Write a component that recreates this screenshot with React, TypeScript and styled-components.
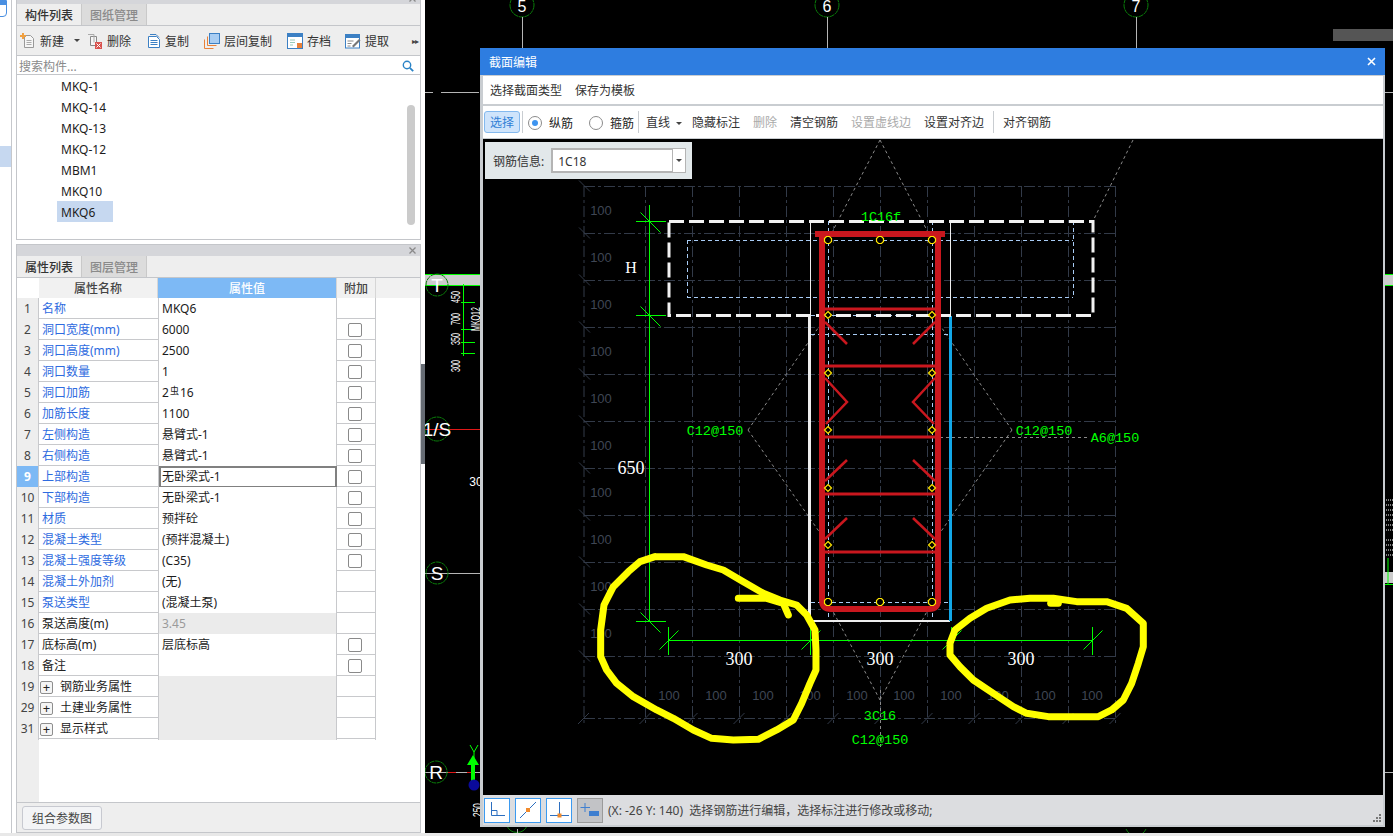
import React from 'react';
import styled, { createGlobalStyle } from 'styled-components';

const Global = createGlobalStyle`
  html, body { margin: 0; padding: 0; background: #e9e9e9; overflow: hidden; }
  * { box-sizing: border-box; }
  body { font-family: "Noto Sans", "Noto Sans CJK SC", "Liberation Sans", sans-serif; font-size: 12px; color: #222; }
`;

const Page = styled.div`width: 1393px; height: 836px; display: flex; flex-direction: column; background: #e8e8e8;`;
const Workspace = styled.div`height: 833px; display: flex;`;
const Side = styled.aside`position: relative; width: 425px; height: 100%; display: flex; background: #fff;`;
const Rail = styled.div`width: 12px; height: 100%; background: #fff; border-right: 1px solid #c6c8cc; display: flex; flex-direction: column;`;
const RailLogo = styled.svg`display: block; width: 9px; height: 20px;`;
const RailMark = styled.div`width: 11px; height: 21px; margin-top: 126px; background: #c6d8f0;`;
const Panels = styled.div`width: 405px; margin-left: 4px; display: flex; flex-direction: column; gap: 4px; height: 100%;`;
const TopPanel = styled.section`height: 240px; display: flex; flex-direction: column; border: 1px solid #c4c6ca; border-top: 0; background: #fff;`;
const BottomPanel = styled.section`flex: 1; display: flex; flex-direction: column; border: 1px solid #c4c6ca; background: #fff; min-height: 0;`;
const PanelCap = styled.div<{ $h: number }>`height: ${p => p.$h}px; background: #d5d6da; display: flex; justify-content: flex-end; align-items: flex-end; padding: 0 4px 2px 0; overflow: hidden; flex: none;`;
const CloseGlyph = styled.svg`width: 7px; height: 7px; flex: none;`;
const TabBar = styled.div`height: 22px; display: flex; background: #eee; border-bottom: 1px solid #c4c6ca; flex: none;`;
const Tab = styled.div<{ $on?: boolean }>`width: 65px; height: 21px; line-height: 23px; text-align: center; font-weight: 500;
  color: ${p => (p.$on ? '#333' : '#8a8a8a')}; background: ${p => (p.$on ? '#eee' : '#dcdcdc')}; border-right: 1px solid #c9c9c9;`;
const Tools = styled.div`height: 30px; flex: none; position: relative; display: flex; align-items: center; padding-left: 3px; background: #eee; border-bottom: 1px solid #c4c6ca;`;
const Tool = styled.div<{ $gap: number }>`display: flex; align-items: center; gap: 4px; margin-right: ${p => p.$gap}px; color: #333; white-space: nowrap;`;
const Caret = styled.i`display: inline-block; width: 0; height: 0; border: 3px solid transparent; border-top: 3px solid #444; border-bottom: 0; margin-left: 6px; vertical-align: middle;`;
const More = styled.span`position: absolute; right: 2px; top: 9px; font-size: 8px; color: #444; letter-spacing: -1px;`;
const Search = styled.div`height: 19px; flex: none; display: flex; align-items: center; justify-content: space-between; padding: 2px 6px 0 2px; color: #8a8a8a; border-bottom: 1px solid #c4c6ca;`;
const List = styled.div`position: relative; flex: 1; padding-top: 0;`;
const Item = styled.div<{ $on?: boolean }>`height: 21px; line-height: 23px; width: 56px; margin-left: 40px; padding-left: 4px; white-space: nowrap; color: #1c1c1c; background: ${p => (p.$on ? '#c6d8f0' : 'transparent')};`;
const ScrollThumb = styled.div`position: absolute; top: 30px; left: 390px; width: 8px; height: 120px; border-radius: 4px; background: #cbcbcb;`;

const Sheet = styled.div`flex: 1; display: flex; flex-direction: column; min-height: 0; background: linear-gradient(to right, #eee 22px, #fff 22px);`;
const HeadRow = styled.div`display: grid; grid-template-columns: 22px 119px 179px 39px; height: 20px; flex: none; background: #fff;`;
const HeadWide = styled.div`display: flex; height: 20px; flex: none; background: #f1f1f1;`;
const HeadCell = styled.div<{ $on?: boolean }>`line-height: 21px; text-align: center; font-weight: 500; color: ${p => (p.$on ? '#fff' : '#444')};
  background: ${p => (p.$on ? '#7db9f5' : '#f1f1f1')}; border-right: 1px solid #d6d6d6;`;
const HeadBlank = styled.div`background: #fff;`;
const Row = styled.div`display: grid; grid-template-columns: 22px 120px 178px 39px; width: 359px; height: 21px; flex: none; border-bottom: 1px solid #c8c9cc; background: #fff;`;
const NumCell = styled.div<{ $on?: boolean }>`line-height: 22px; text-align: center; border-right: 1px solid #c8c9cc; font-weight: ${p => (p.$on ? 700 : 400)}; font-size: 12px;
  background: ${p => (p.$on ? '#7db9f5' : '#eee')}; color: ${p => (p.$on ? '#fff' : '#444')};`;
const NameCell = styled.div<{ $blue?: boolean }>`line-height: 22px; padding-left: 3px; white-space: nowrap; border-right: 1px solid #c8c9cc; color: ${p => (p.$blue ? '#2e6be0' : '#222')};`;
const GroupName = styled(NameCell)`display: flex; align-items: center; gap: 7px; padding-left: 1px;`;
const PlusBox = styled.span`width: 13px; height: 13px; border: 1px solid #8e8e8e; border-radius: 2px; background: #f5f5f5; line-height: 10px; text-align: center; font-size: 13px; color: #222;`;
const ValueCell = styled.div<{ $grey?: boolean; $muted?: boolean; $focus?: boolean }>`line-height: 22px; padding-left: 3px; white-space: nowrap; border-right: 1px solid #c8c9cc;
  background: ${p => (p.$grey ? '#ebebeb' : '#fff')}; color: ${p => (p.$muted ? '#9a9a9a' : '#1c1c1c')};
  ${p => p.$focus && 'outline: 2px solid #808080; outline-offset: -2px;'}`;
const Rebar = styled.sup`font-size: 9px; line-height: 0; margin: 0 1px; vertical-align: 3px;`;
const ExtraCell = styled.div`display: flex; align-items: center; justify-content: center; border-right: 1px solid #c8c9cc;`;
const Check = styled.span`width: 14px; height: 14px; border: 1px solid #8a8a8a; border-radius: 2px; background: #fff; margin-right: 2px;`;
const SheetFiller = styled.div`flex: 1;`;
const Footer = styled.div`height: 30px; flex: none; background: #eee; border-top: 1px solid #c4c6ca; padding: 3px 0 0 5px;`;
const FootBtn = styled.button`width: 80px; height: 24px; padding: 0; font: inherit; color: #444; background: #f3f4f6; border: 1px solid #c7c9d0; border-radius: 3px;`;
const Splitter = styled.div`position: absolute; right: 0; top: 364px; width: 4px; height: 100px; background: #666c74;`;

const Canvas = styled.main`position: relative; flex: 1; background: #000; overflow: hidden;`;
const BackSvg = styled.svg`display: block; width: 968px; height: 833px;`;
const Dialog = styled.div`position: absolute; left: 55px; top: 48px; width: 905px; height: 779px; display: flex; flex-direction: column; background: #c9cdd1; border: solid #c9cdd1; border-width: 0 2px 2px 3px;`;
const DialogTitle = styled.div`height: 27px; margin: 0 -2px 1px -3px; flex: none; background: #2e7de0; color: #fff; display: flex; align-items: center; justify-content: space-between; padding: 0 9px;`;
const DialogClose = styled.svg`width: 9px; height: 9px;`;
const MenuBar = styled.div`height: 28px; flex: none; background: #fff; display: flex; align-items: center; padding-left: 1px;`;
const ToolBar = styled.div`height: 33px; margin-top: 2px; flex: none; background: #fff; display: flex; align-items: center; padding-left: 1px; border-bottom: 1px solid #c9cdd1;`;
const Flat = styled.div<{ $off?: boolean }>`height: 22px; line-height: 24px; padding: 0 6px; margin-right: 1px; white-space: nowrap; color: ${p => (p.$off ? '#aaa' : '#333')};`;
const LineFlat = styled(Flat)`padding-right: 3px;`;
const SelectBtn = styled.div`width: 36px; height: 22px; line-height: 22px; text-align: center; color: #2f7fd6; background: #cfe4fb; border: 1px solid #84b9ee; border-radius: 3px;`;
const VSep = styled.div<{ $l: number; $r: number }>`width: 1px; height: 22px; background: #c9cdd1; margin: 0 ${p => p.$r}px 0 ${p => p.$l}px;`;
const Radio = styled.span<{ $on?: boolean }>`position: relative; width: 14px; height: 14px; border-radius: 50%; border: 1px solid #8b8b8b; background: #fff; flex: none;
  ${p => p.$on && `&::after { content: ''; position: absolute; left: 3px; top: 3px; width: 6px; height: 6px; border-radius: 50%; background: #3d94f0; }`}`;
const RadioWrap = styled.label<{ $w: number }>`display: flex; align-items: center; gap: 7px; width: ${p => p.$w}px; color: #222; white-space: nowrap; padding-top: 1px;`;
const Drawing = styled.div`position: relative; flex: 1; background: #000; min-height: 0;`;
const DrawSvg = styled.svg`display: block; width: 900px; height: 656px;`;
const InfoChip = styled.div`position: absolute; left: 2px; top: 3px; width: 207px; height: 37px; background: #e2e8ea; display: flex; align-items: center; padding-left: 8px; gap: 7px; color: #333;`;
const Combo = styled.div`width: 135px; height: 25px; display: flex; background: #fff; border: 2px solid #b4b4b4; border-right: 0;`;
const ComboText = styled.div`flex: 1; line-height: 23px; padding-left: 5px; color: #333;`;
const ComboArrow = styled.div`width: 14px; margin-top: -2px; margin-bottom: -2px; border: 1px solid #b4b4b4; background: #fff; display: flex; align-items: center; justify-content: center;`;
const ComboCaret = styled(Caret)`margin-left: 0;`;
const Status = styled.div`position: relative; height: 30px; flex: none; background: #dcdde0; display: flex; align-items: center; padding-left: 1px; gap: 5px;`;
const StatBtn = styled.div<{ $grey?: boolean }>`width: 26px; height: 25px; background: ${p => (p.$grey ? '#c2c3c6' : '#fff')}; border: 1px solid ${p => (p.$grey ? '#9a9a9a' : '#3b9af0')}; display: flex; align-items: center; justify-content: center;`;
const StatText = styled.div`margin-left: 0; color: #444; white-space: pre;`;
const Grip = styled.svg`position: absolute; right: 2px; bottom: 2px; width: 9px; height: 9px;`;
const BottomStrip = styled.div`height: 3px; background: #e8e8e8;`;

const GridLine = styled.line`stroke: #323a48; stroke-width: 1; stroke-dasharray: 11 3 3 3;`;
const GridTick = styled.line`stroke: #323a48; stroke-width: 1;`;
const GreyDash = styled.line`stroke: #8a8a8a; stroke-width: 1; stroke-dasharray: 3 3;`;
const BlueDash = styled.line`stroke: #a8ccf5; stroke-width: 1; stroke-dasharray: 4 3;`;
const Dim = styled.line`stroke: #00ff00; stroke-width: 1; shape-rendering: crispEdges;`;
const Slash = styled.line`stroke: #00ff00; stroke-width: 1;`;
const RedBar = styled.line<{ $w?: number }>`stroke: #c9171e; stroke-width: ${p => p.$w ?? 3};`;
const Hook = styled.polyline`fill: none; stroke: #c9171e; stroke-width: 2.5;`;
const Outline = styled.path`fill: none; stroke: #c9171e; stroke-width: 6;`;
const WhiteLine = styled.line<{ $w?: number }>`stroke: #eee; stroke-width: ${p => p.$w ?? 1};`;
const BlueEdge = styled.line`stroke: #12a8e8; stroke-width: 3;`;
const Frame = styled.rect`fill: none; stroke: #f2f2f2; stroke-width: 3; stroke-dasharray: 15 5;`;
const Ink = styled.path`fill: none; stroke: #ff0; stroke-width: 21; stroke-linecap: round; stroke-linejoin: round;`;
const Dot = styled.path`fill: #000; stroke: #ffe600; stroke-width: 1.2;`;
const GridLabel = styled.text`fill: #3f4654; font-family: "Liberation Sans", sans-serif; font-size: 13px; text-anchor: middle;`;
const GreenLabel = styled.text`fill: #00ff00; font-family: "Liberation Mono", monospace; font-size: 13.5px; text-anchor: middle;`;
const BigLabel = styled.text<{ $s?: number }>`fill: #fff; font-family: "Liberation Serif", serif; font-size: ${p => p.$s ?? 18}px; text-anchor: middle;`;
const AxisRing = styled.circle`fill: none; stroke: #0a7d0a; stroke-width: 1; stroke-dasharray: 5 .6;`;
const AxisText = styled.text<{ $s?: number }>`fill: #fff; font-family: "Liberation Sans", sans-serif; font-size: ${p => p.$s ?? 19}px; text-anchor: middle;`;
const AxisLine = styled.line<{ $c?: string }>`stroke: ${p => p.$c ?? '#b5b5b5'}; stroke-width: 1;`;
const TinyLabel = styled.text`fill: #fff; font-family: "Liberation Sans", sans-serif; font-size: 12px; text-anchor: middle;`;

const X = ({ c = '#8a8a8a' }: { c?: string }) => (
  <CloseGlyph viewBox="0 0 7 7"><path d="M.5.5l6 6M6.5.5l-6 6" stroke={c} strokeWidth="1.3" /></CloseGlyph>
);

const IconNew = () => (
  <svg width="16" height="16" viewBox="0 0 16 16"><path d="M4.5 2.5h6l3 3v9h-9z" fill="#f6f6f6" stroke="#999" /><path d="M6.5 7.5h5M6.5 9.5h5M6.5 11.5h5" stroke="#aaa" /><path d="M0 2h2V0h2v2h2v2H4v2H2V4H0z" fill="#f0a040" /></svg>
);
const IconDel = () => (
  <svg width="16" height="16" viewBox="0 0 16 16"><path d="M3.5 3.5h6v9h-6z" fill="#f6f6f6" stroke="#888" /><path d="M1 1.5h6v8" fill="none" stroke="#aaa" /><rect x="8" y="9" width="7" height="7" fill="#d9534f" /><path d="M9.5 10.5l4 4M13.5 10.5l-4 4" stroke="#fff" /></svg>
);
const IconCopy = () => (
  <svg width="14" height="16" viewBox="0 0 14 16"><path d="M1.5 3.5h8l3 3v8h-11z" fill="#fff" stroke="#3c80c4" /><path d="M3 1.5h6l3 3" fill="none" stroke="#3c80c4" /><path d="M3.5 7.5h7M3.5 9.5h7M3.5 11.5h7" stroke="#3c80c4" /></svg>
);
const IconFloor = () => (
  <svg width="16" height="16" viewBox="0 0 16 16"><rect x="5.5" y=".5" width="10" height="10" fill="#a9cdf2" stroke="#3c80c4" /><path d="M3.5 3.5v9h9M.5 6.5v9h9" fill="none" stroke="#e8813a" /></svg>
);
const IconSave = () => (
  <svg width="16" height="16" viewBox="0 0 16 16"><rect x=".5" y=".5" width="15" height="15" fill="#fff" stroke="#3c80c4" /><rect x="0" y="0" width="16" height="4" fill="#3c80c4" /><path d="M3 7h5M3 9.5h5M3 12h3" stroke="#9cb" /><rect x="10" y="10" width="5" height="5" fill="#e8813a" /></svg>
);
const IconFetch = () => (
  <svg width="16" height="16" viewBox="0 0 16 16"><rect x=".5" y="1.5" width="14" height="13.5" fill="#fff" stroke="#3c80c4" /><rect x="0" y="1" width="15" height="4" fill="#3c80c4" /><path d="M2.5 8h6M2.5 10.5h4M2.5 13h3" stroke="#888" /><path d="M7 13l7-7 1.5 1.5-7 7z" fill="#777" /></svg>
);
const IconSearch = () => (
  <svg width="12" height="12" viewBox="0 0 12 12"><circle cx="5" cy="5" r="3.7" fill="none" stroke="#2a83c6" strokeWidth="1.4" /><path d="M7.8 7.8l3.4 3.4" stroke="#2a83c6" strokeWidth="1.8" /></svg>
);

type R = { n: string; name: string; blue?: boolean; val?: React.ReactNode; check?: boolean; group?: boolean; on?: boolean; grey?: boolean; muted?: boolean };
const rows: R[] = [
  { n: '1', name: '名称', blue: true, val: 'MKQ6' },
  { n: '2', name: '洞口宽度(mm)', blue: true, val: '6000', check: true },
  { n: '3', name: '洞口高度(mm)', blue: true, val: '2500', check: true },
  { n: '4', name: '洞口数量', blue: true, val: '1', check: true },
  { n: '5', name: '洞口加筋', blue: true, val: <>2<Rebar>虫</Rebar>16</>, check: true },
  { n: '6', name: '加筋长度', blue: true, val: '1100', check: true },
  { n: '7', name: '左侧构造', blue: true, val: '悬臂式-1', check: true },
  { n: '8', name: '右侧构造', blue: true, val: '悬臂式-1', check: true },
  { n: '9', name: '上部构造', blue: true, val: '无卧梁式-1', check: true, on: true },
  { n: '10', name: '下部构造', blue: true, val: '无卧梁式-1', check: true },
  { n: '11', name: '材质', blue: true, val: '预拌砼', check: true },
  { n: '12', name: '混凝土类型', blue: true, val: '(预拌混凝土)', check: true },
  { n: '13', name: '混凝土强度等级', blue: true, val: '(C35)', check: true },
  { n: '14', name: '混凝土外加剂', blue: true, val: '(无)' },
  { n: '15', name: '泵送类型', blue: true, val: '(混凝土泵)' },
  { n: '16', name: '泵送高度(m)', val: '3.45', grey: true, muted: true },
  { n: '17', name: '底标高(m)', val: '层底标高', check: true },
  { n: '18', name: '备注', val: '', check: true },
  { n: '19', name: '钢筋业务属性', group: true, grey: true },
  { n: '29', name: '土建业务属性', group: true, grey: true },
  { n: '31', name: '显示样式', group: true, grey: true },
];

const gridV = [584, 645.5, 692.5, 739.5, 786.5, 833.5, 880.5, 927.5, 974.5, 1021.5, 1068.5, 1115.5];
const gridH = [186.5, 233.5, 280.5, 327.5, 374.5, 421.5, 468.5, 515.5, 562.5, 609.5, 656.5, 718.5];
const labelY = [211, 258, 305, 352, 399, 446, 493, 540, 587, 634];
const labelX = [669, 716, 763, 810, 857, 904, 951, 998, 1045, 1092];
const barY = [240, 315, 373, 430, 488, 545, 602];

const diamond = (x: number, y: number, r: number) => `M${x} ${y - r}L${x + r} ${y}L${x} ${y + r}L${x - r} ${y}Z`;
const octagon = (x: number, y: number, r: number) => {
  const s = r * 0.42;
  return `M${x - s} ${y - r}H${x + s}L${x + r} ${y - s}V${y + s}L${x + s} ${y + r}H${x - s}L${x - r} ${y + s}V${y - s}Z`;
};
const pts = (a: number[][]) => 'M' + a.map(p => p.join(' ')).join('L');

const loopA = [[225,50],[310,50],[380,75],[430,90],[490,125],[550,160],[600,180],[650,195],[680,225],[705,270],[708,330],[708,390],[690,430],[665,490],[640,540],[590,570],[535,598],[460,600],[395,595],[340,570],[280,535],[230,510],[160,470],[110,430],[80,390],[62,350],[62,270],[72,195],[100,140],[145,95],[180,65],[225,50]];
const hookA = [[475,175],[560,175],[610,190],[625,225]];
const loopB = [[60,310],[75,270],[120,235],[170,205],[240,180],[300,175],[370,175],[440,185],[530,185],[590,205],[640,250],[640,320],[625,370],[605,430],[580,480],[545,510],[505,530],[430,530],[355,530],[290,520],[250,500],[190,460],[130,420],[90,380],[60,345],[60,310]];
const hookB = [[362,190],[385,190]];

const Tick = ({ x, y, h }: { x: number; y: number; h?: boolean }) => (
  <>
    {h ? <Dim x1={x - 14} y1={y} x2={x + 16} y2={y} /> : <Dim x1={x} y1={y - 14} x2={x} y2={y + 14} />}
    {h ? <Slash x1={x - 9} y1={y - 9} x2={x + 11} y2={y + 11} /> : <Slash x1={x - 9} y1={y + 9} x2={x + 10} y2={y - 10} />}
  </>
);

const Section = () => (
  <DrawSvg viewBox="483 139 900 656">
    {gridH.map(y => <GridLine key={y} x1={584} y1={y} x2={1118} y2={y} />)}
    {gridV.map(x => <GridLine key={x} x1={x} y1={186} x2={x} y2={726} />)}
    {gridV.map(x => <GridTick key={`t${x}`} x1={x - 6} y1={724} x2={x + 5} y2={713} />)}
    {gridH.slice(0, 11).map(y => <GridTick key={`u${y}`} x1={579} y1={y - 6} x2={590} y2={y + 5} />)}
    {labelY.map(y => <GridLabel key={y} x={601} y={y + 4}>100</GridLabel>)}
    {labelX.map(x => <GridLabel key={x} x={x} y={700}>100</GridLabel>)}

    <GreyDash x1={880} y1={140} x2={828} y2={240} />
    <GreyDash x1={880} y1={140} x2={932} y2={240} />
    <GreyDash x1={1133} y1={140} x2={1093} y2={221} />
    <GreyDash x1={748} y1={430} x2={825} y2={318} />
    <GreyDash x1={748} y1={430} x2={825} y2={540} />
    <GreyDash x1={1012} y1={430} x2={935} y2={318} />
    <GreyDash x1={1012} y1={430} x2={935} y2={540} />
    <GreyDash x1={828} y1={602} x2={880} y2={700} />
    <GreyDash x1={932} y1={602} x2={880} y2={700} />
    <GreyDash x1={880.5} y1={690} x2={880.5} y2={750} />
    <GreyDash x1={880} y1={437.5} x2={1090} y2={437.5} />

    <BlueDash x1={687} y1={240.5} x2={1073} y2={240.5} />
    <BlueDash x1={687} y1={297.5} x2={1073} y2={297.5} />
    <BlueDash x1={687.5} y1={240} x2={687.5} y2={297} />
    <BlueDash x1={1073.5} y1={221} x2={1073.5} y2={297} />
    <BlueDash x1={811} y1={315.5} x2={950} y2={315.5} />
    <BlueDash x1={811} y1={334.5} x2={950} y2={334.5} />
    <BlueDash x1={811} y1={602.5} x2={950} y2={602.5} />
    <BlueDash x1={828.5} y1={221} x2={828.5} y2={620} />
    <BlueDash x1={932.5} y1={221} x2={932.5} y2={620} />

    <WhiteLine x1={810.5} y1={222} x2={810.5} y2={316} />
    <WhiteLine x1={950.5} y1={222} x2={950.5} y2={316} />
    <WhiteLine $w={3} x1={809.5} y1={316} x2={809.5} y2={622} />
    <WhiteLine $w={2} x1={809} y1={621} x2={950} y2={621} />
    <BlueEdge x1={950.5} y1={316} x2={950.5} y2={621} />
    <Frame x={669} y={221.5} width={424} height={94} />

    <Outline d="M822 234V600Q822 609 831 609H929Q938 609 938 600V234" />
    <RedBar $w={6} x1={815} y1={234} x2={945} y2={234} />
    {[309, 366, 437, 494, 552].map(y => <RedBar key={y} x1={825} y1={y} x2={935} y2={y} />)}
    <Hook points="825,322 847,344" />
    <Hook points="935,322 913,344" />
    <Hook points="825,378 847,402 826,424" />
    <Hook points="935,378 913,402 934,424" />
    <Hook points="825,481 847,460" />
    <Hook points="935,481 913,460" />
    <Hook points="825,539 847,518" />
    <Hook points="935,539 913,518" />

    {barY.map(y => <Dot key={`a${y}`} d={y === 240 || y === 602 ? octagon(828, y, 3.5) : diamond(828, y, 3.5)} />)}
    {barY.map(y => <Dot key={`b${y}`} d={y === 240 || y === 602 ? octagon(932, y, 3.5) : diamond(932, y, 3.5)} />)}
    <Dot d={octagon(880, 240, 3.5)} />
    <Dot d={octagon(880, 602, 3.5)} />

    <Dim x1={649.5} y1={205} x2={649.5} y2={621} />
    <Tick x={649.5} y={221.5} h />
    <Tick x={649.5} y={315.5} h />
    <Tick x={649.5} y={621.5} h />
    <Dim x1={668} y1={640.5} x2={1092} y2={640.5} />
    {[668, 810, 951, 1092].map(x => <Tick key={x} x={x + 0.5} y={640.5} />)}

    <GreenLabel x={881} y={221} textLength={40}>1C16f</GreenLabel>
    <GreenLabel x={715} y={435}>C12@150</GreenLabel>
    <GreenLabel x={1044} y={435}>C12@150</GreenLabel>
    <GreenLabel x={1115} y={442}>A6@150</GreenLabel>
    <GreenLabel x={880} y={720}>3C16</GreenLabel>
    <GreenLabel x={880} y={744}>C12@150</GreenLabel>
    <BigLabel $s={16} x={631} y={273}>H</BigLabel>
    <BigLabel x={631} y={474}>650</BigLabel>
    <BigLabel x={739} y={665}>300</BigLabel>
    <BigLabel x={880} y={665}>300</BigLabel>
    <BigLabel x={1021} y={665}>300</BigLabel>

    <g transform="translate(580 540) scale(.3333)">
      <Ink d={pts(loopA)} />
      <Ink d={pts(hookA)} />
    </g>
    <g transform="translate(930 540) scale(.3333)">
      <Ink d={pts(loopB)} />
      <Ink d={pts(hookB)} />
    </g>
  </DrawSvg>
);

const Backdrop = () => (
  <BackSvg viewBox="425 0 968 833">
    {([[522, '5'], [827, '6'], [1136, '7']] as [number, string][]).map(([x, t]) => (
      <g key={t}>
        <AxisRing cx={x} cy={5} r={12} />
        <AxisText $s={16} x={x} y={12}>{t}</AxisText>
        <AxisLine x1={x + 0.5} y1={17} x2={x + 0.5} y2={48} />
      </g>
    ))}
    <rect x={1333} y={29} width={60} height={12} fill="#555" />
    <AxisLine x1={425} y1={92.5} x2={480} y2={92.5} strokeDasharray="8 8 30 0" />
    <AxisLine x1={1385} y1={92.5} x2={1393} y2={92.5} />
    <rect x={425} y={275} width={55} height={10} fill="#ccc" />
    <rect x={1385} y={275} width={8} height={10} fill="#ccc" />
    <line x1={425} y1={274.5} x2={480} y2={274.5} stroke="#0f0" />
    <line x1={425} y1={285.5} x2={480} y2={285.5} stroke="#0f0" />
    <line x1={1385} y1={274.5} x2={1393} y2={274.5} stroke="#0f0" />
    <line x1={1385} y1={285.5} x2={1393} y2={285.5} stroke="#0f0" />
    <AxisRing cx={437} cy={285} r={11} />
    <AxisText x={437} y={292}>T</AxisText>
    <Dim x1={463.5} y1={284} x2={463.5} y2={356} />
    {[302.5, 329.5, 342.5, 353.5].map(y => <Dim key={y} x1={461} y1={y} x2={475} y2={y} />)}
    {([[456, 297, '450'], [456, 319, '700'], [456, 339, '350'], [456, 366, '300']] as [number, number, string][]).map(([x, y, t]) => (
      <TinyLabel key={t} transform={`rotate(-90 ${x} ${y})`} x={x} y={y + 4} textLength={12} lengthAdjust="spacingAndGlyphs">{t}</TinyLabel>
    ))}
    <TinyLabel transform="rotate(-90 476 319)" x={476} y={323} textLength={24} lengthAdjust="spacingAndGlyphs">MKQ12</TinyLabel>
    <line x1={425} y1={429.5} x2={480} y2={429.5} stroke="#e01818" />
    <AxisRing cx={437} cy={429} r={12} />
    <AxisText x={437} y={436}>1/S</AxisText>
    <TinyLabel x={476} y={486}>30</TinyLabel>
    <AxisLine x1={425} y1={573.5} x2={480} y2={573.5} />
    <AxisRing cx={437} cy={573} r={11} />
    <AxisText x={437} y={580}>S</AxisText>
    <AxisLine x1={425} y1={772.5} x2={480} y2={772.5} />
    <line x1={448} y1={772.5} x2={456} y2={772.5} stroke="#e01818" />
    <line x1={467} y1={772.5} x2={471} y2={772.5} stroke="#e01818" />
    <AxisRing cx={436} cy={772} r={11} />
    <AxisText x={436} y={779}>R</AxisText>
    <path d="M471 783V765H467L473 755L479 765H475V783Z" fill="#0f0" />
    <circle cx={474} cy={785} r={5.5} fill="#0a0a9a" />
    <path d="M470 745L474 752L478 745M474 752V758" fill="none" stroke="#0f0" />
    <TinyLabel transform="rotate(-90 478 810)" x={478} y={814} textLength={14} lengthAdjust="spacingAndGlyphs">250</TinyLabel>
    {[500, 505, 510, 515, 520, 525, 530, 540, 545, 550, 555].map(y => <line key={y} x1={1386} y1={y} x2={1393} y2={y} stroke="#fff" strokeDasharray="1 1" />)}
    <rect x={1385} y={572} width={8} height={11} fill="#ccc" />
    <line x1={1388} y1={558} x2={1388} y2={584} stroke="#0f0" />
    <line x1={1385} y1={584.5} x2={1393} y2={584.5} stroke="#0f0" />
    <AxisLine x1={1385} y1={772.5} x2={1393} y2={772.5} />
    <path d="M507 826a11 11 0 0 0 20 0M1126 829a11 11 0 0 0 20 0" fill="none" stroke="#0a7d0a" />
    <AxisLine x1={517.5} y1={829} x2={517.5} y2={833} />
  </BackSvg>
);

export default function App() {
  return (
    <Page>
      <Global />
      <Workspace>
        <Side>
          <Rail>
            <RailLogo viewBox="0 0 9 20"><path d="M-2 .5H6.5V13Q6.5 16.5 3 16.5H-2" fill="#fff" stroke="#4a90e2" /><rect x="0" y="0" width="6" height="5" fill="#4a90e2" /></RailLogo>
            <RailMark />
          </Rail>
          <Panels>
            <TopPanel>
              <PanelCap $h={4}><X /></PanelCap>
              <TabBar><Tab $on>构件列表</Tab><Tab>图纸管理</Tab></TabBar>
              <Tools>
                <Tool $gap={7}><IconNew />新建<Caret /></Tool>
                <Tool $gap={16}><IconDel />删除</Tool>
                <Tool $gap={15}><IconCopy />复制</Tool>
                <Tool $gap={15}><IconFloor />层间复制</Tool>
                <Tool $gap={14}><IconSave />存档</Tool>
                <Tool $gap={0}><IconFetch />提取</Tool>
                <More>▸▸</More>
              </Tools>
              <Search>搜索构件...<IconSearch /></Search>
              <List>
                {['MKQ-1', 'MKQ-14', 'MKQ-13', 'MKQ-12', 'MBM1', 'MKQ10', 'MKQ6'].map(t => (
                  <Item key={t} $on={t === 'MKQ6'}>{t}</Item>
                ))}
                <ScrollThumb />
              </List>
            </TopPanel>
            <BottomPanel>
              <PanelCap $h={11}><X /></PanelCap>
              <TabBar><Tab $on>属性列表</Tab><Tab>图层管理</Tab></TabBar>
              <Sheet>
                <HeadWide>
                  <HeadRow>
                    <HeadBlank />
                    <HeadCell>属性名称</HeadCell>
                    <HeadCell $on>属性值</HeadCell>
                    <HeadCell>附加</HeadCell>
                  </HeadRow>
                </HeadWide>
                {rows.map(r => (
                  <Row key={r.n}>
                    <NumCell $on={r.on}>{r.n}</NumCell>
                    {r.group
                      ? <GroupName><PlusBox>+</PlusBox>{r.name}</GroupName>
                      : <NameCell $blue={r.blue}>{r.name}</NameCell>}
                    <ValueCell $grey={r.grey} $muted={r.muted} $focus={r.on}>{r.val}</ValueCell>
                    <ExtraCell>{r.check && <Check />}</ExtraCell>
                  </Row>
                ))}
                <SheetFiller />
              </Sheet>
              <Footer><FootBtn>组合参数图</FootBtn></Footer>
            </BottomPanel>
          </Panels>
          <Splitter />
        </Side>
        <Canvas>
          <Backdrop />
          <Dialog>
            <DialogTitle>
              <span>截面编辑</span>
              <DialogClose viewBox="0 0 9 9"><path d="M1 1l7 7M8 1l-7 7" stroke="#fff" strokeWidth="1.6" /></DialogClose>
            </DialogTitle>
            <MenuBar>
              <Flat>选择截面类型</Flat>
              <Flat>保存为模板</Flat>
            </MenuBar>
            <ToolBar>
              <SelectBtn>选择</SelectBtn>
              <VSep $l={2} $r={5} />
              <RadioWrap $w={61}><Radio $on />纵筋</RadioWrap>
              <RadioWrap $w={49}><Radio />箍筋</RadioWrap>
              <VSep $l={0} $r={1} />
              <LineFlat>直线<Caret /></LineFlat>
              <Flat>隐藏标注</Flat>
              <Flat $off>删除</Flat>
              <Flat>清空钢筋</Flat>
              <Flat $off>设置虚线边</Flat>
              <Flat>设置对齐边</Flat>
              <VSep $l={2} $r={3} />
              <Flat>对齐钢筋</Flat>
            </ToolBar>
            <Drawing>
              <Section />
              <InfoChip>
                钢筋信息:
                <Combo>
                  <ComboText>1C18</ComboText>
                  <ComboArrow><ComboCaret /></ComboArrow>
                </Combo>
              </InfoChip>
            </Drawing>
            <Status>
              <StatBtn><svg width="18" height="18" viewBox="0 0 18 18"><path d="M3.5 1v13.5H17M3.5 9.5H9v5" fill="none" stroke="#2d6fc0" /></svg></StatBtn>
              <StatBtn><svg width="20" height="20" viewBox="0 0 20 20"><path d="M2 18L18 2" stroke="#2d6fc0" /><rect x="8" y="8" width="4" height="4" fill="#f08a2c" /></svg></StatBtn>
              <StatBtn><svg width="20" height="20" viewBox="0 0 20 20"><path d="M10.5 2v13M1 15.5h19" stroke="#2d6fc0" /><rect x="8.5" y="13.5" width="4" height="4" fill="#f08a2c" /></svg></StatBtn>
              <StatBtn $grey><svg width="22" height="20" viewBox="0 0 22 20"><path d="M6 3v9M1.5 7.5H11" stroke="#3f7fd0" /><rect x="10" y="11" width="10" height="5" fill="#3f7fd0" /></svg></StatBtn>
              <StatText>(X: -26 Y: 140)  选择钢筋进行编辑，选择标注进行修改或移动;</StatText>
              <Grip viewBox="0 0 9 9"><path d="M7 0h2v2H7zM4 3h2v2H4zM7 3h2v2H7zM1 6h2v2H1zM4 6h2v2H4zM7 6h2v2H7z" fill="#777" /></Grip>
            </Status>
          </Dialog>
        </Canvas>
      </Workspace>
      <BottomStrip />
    </Page>
  );
}
